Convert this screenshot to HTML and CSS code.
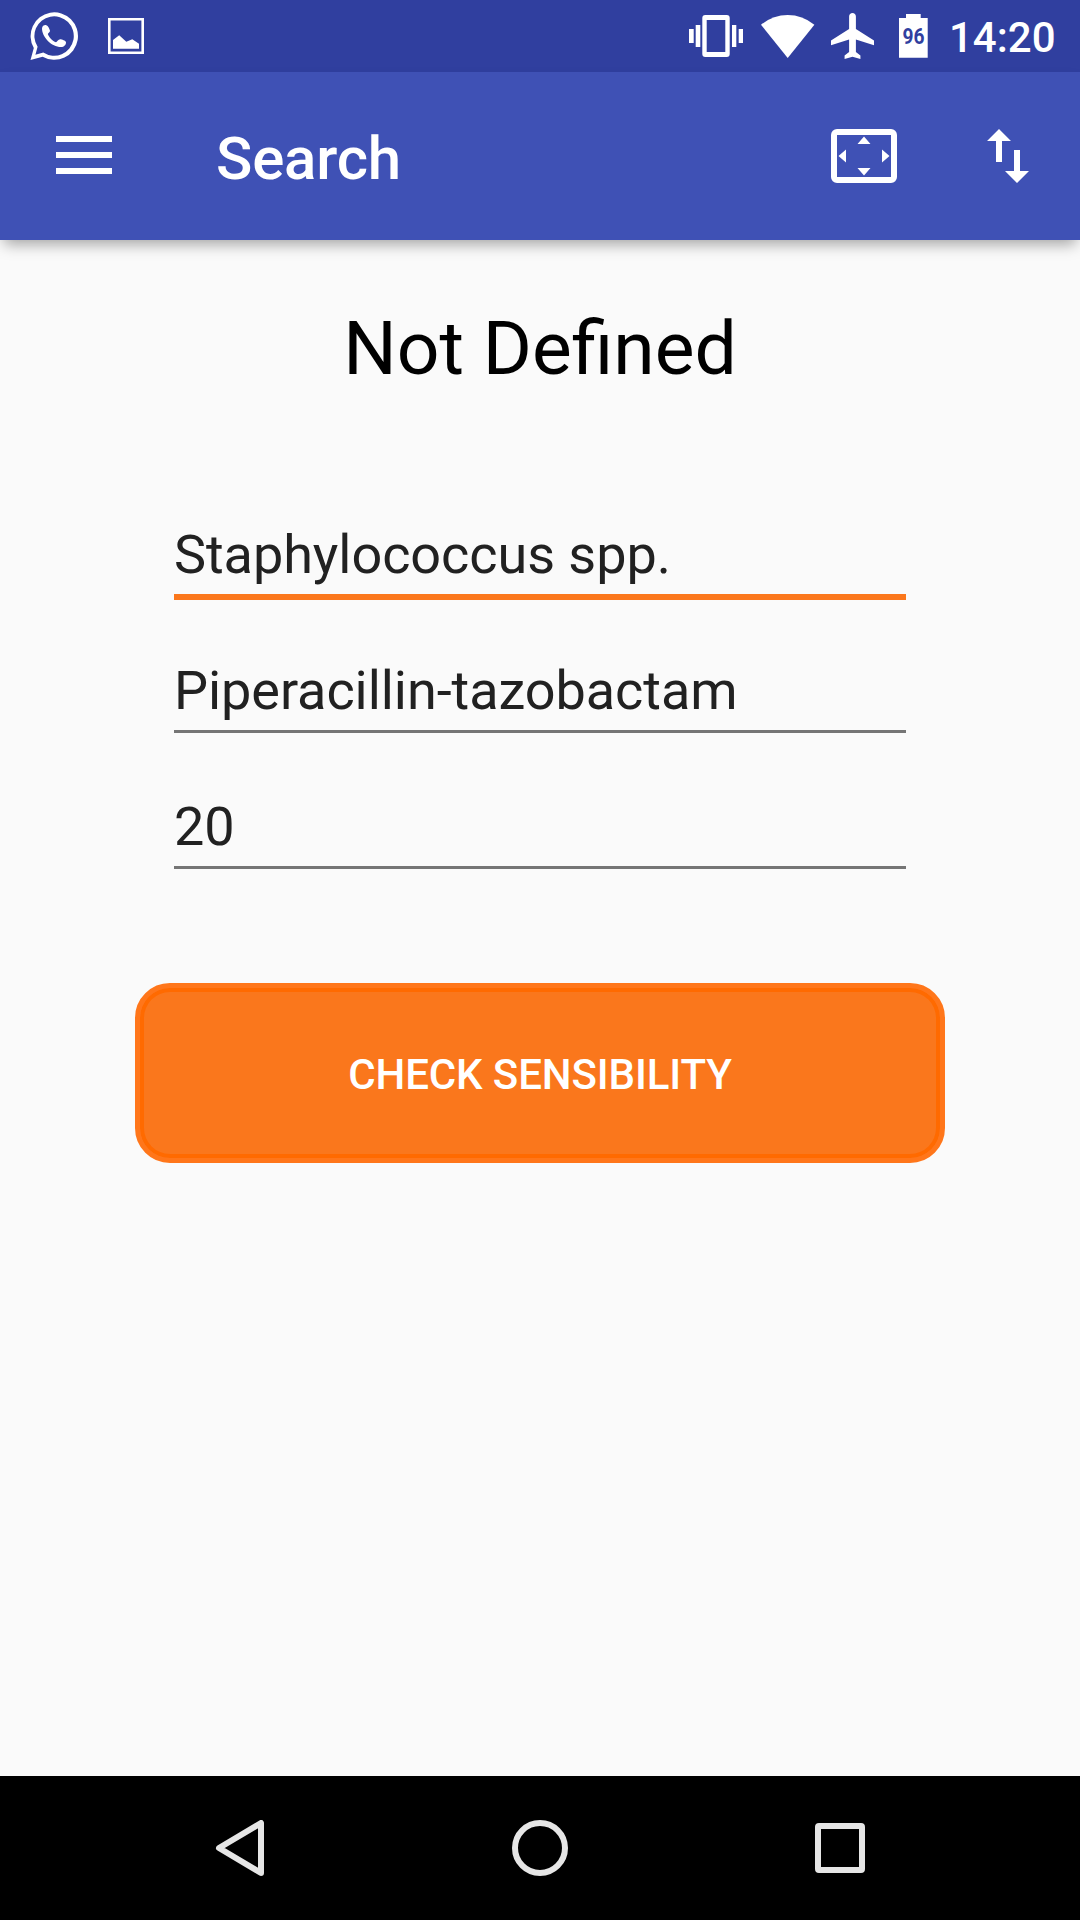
FILE: index.html
```html
<!DOCTYPE html>
<html lang="en">
<head>
<meta charset="utf-8">
<title>Search</title>
<link rel="stylesheet" href="styles.css">
</head>
<body>
<div class="screen">
  <div class="status-bar">
    <svg class="icon-whatsapp" width="48" height="48" viewBox="0 0 48 48">
      <path fill-rule="evenodd" d="M.5 48 3.8 36A23.7 23.7 0 1 1 12.6 44.7ZM5.4 42.7 13.3 40.5A19.7 19.7 0 1 0 7.6 34.8Z"/>
      <path d="M12 16.5C12 14 14.5 12.8 16.3 13.2 18.2 13.8 19.5 17 20 18.7 20 20.2 18.3 20.8 17.8 22 19 25.5 22.5 29 26 30.2 27.5 29.5 28 27.4 30.2 27.3 32 27.5 35.5 28.5 36 30.2 36.2 32.8 34 35 31 35 21.5 35 12 25 12 16.5Z"/>
    </svg>
    <svg class="icon-image" width="36" height="36" viewBox="0 0 36 36">
      <path fill-rule="evenodd" d="M0 0H36V36H0ZM2.6 2.6V33.4H33.4V2.6Z"/>
      <path d="M5 30.8V22L11.2 17.3 18.3 23.7 24.3 21.3 31 25.7V30.8Z"/>
    </svg>
    <div class="status-system">
      <svg class="icon-vibrate" width="54" height="42" viewBox="0 0 54 42">
        <path d="M0 14H4.7V28H0ZM6.7 10H11.3V32H6.7ZM43 10H47.3V32H43ZM49.7 14H54V28H49.7Z"/>
        <path fill-rule="evenodd" d="M16.3 0H37.7A3 3 0 0 1 40.7 3V39A3 3 0 0 1 37.7 42H16.3A3 3 0 0 1 13.3 39V3A3 3 0 0 1 16.3 0ZM17.7 5V37H36.3V5Z"/>
      </svg>
      <svg class="icon-wifi" width="54" height="43" viewBox="0 0 54 43">
        <path d="M0 9.7Q12 0 26.7 0T53.4 9.7L26.7 43Z"/>
      </svg>
      <svg class="icon-airplane" width="43" height="46" viewBox="2 2 19 20" preserveAspectRatio="none">
        <path d="M21 16v-2l-8-5V3.500c0-.83-.67-1.500-1.500-1.500S10 2.670 10 3.500V9l-8 5v2l8-2.500V19l-2 1.500V22l3.500-1 3.500 1v-1.500L13 19v-5.500z"/>
      </svg>
      <svg class="icon-battery" width="29" height="44" viewBox="0 0 29 44">
        <path d="M7 0H21.700V4H28.700V43.700H0V4H7Z"/>
        <text class="battery-level" x="3.500" y="29.800" textLength="22" lengthAdjust="spacingAndGlyphs">96</text>
      </svg>
      <span class="clock">14:20</span>
    </div>
  </div>
  <div class="app-bar">
    <svg class="icon-menu" width="56" height="38" viewBox="0 0 56 38">
      <path d="M0 0H56V6H0ZM0 16H56V22H0ZM0 32H56V38H0Z"/>
    </svg>
    <span class="app-title">Search</span>
    <svg class="icon-overscan" width="66" height="54" viewBox="0 0 66 54">
      <path fill-rule="evenodd" d="M6 0H60A6 6 0 0 1 66 6V48A6 6 0 0 1 60 54H6A6 6 0 0 1 0 48V6A6 6 0 0 1 6 0ZM6 6V48H60V6Z"/>
      <path d="M33 7.500 39.500 15H26.500ZM33 46.500 26.500 39H39.500ZM7.500 27 15 20.500V33.500ZM58.500 27 51 33.500V20.500Z"/>
    </svg>
    <svg class="icon-swap" width="42" height="54" viewBox="0 0 42 54">
      <path d="M12 0 24 12H15V33H9V12H0ZM27 21H33V42H42L30 54 18 42H27Z"/>
    </svg>
  </div>
  <main class="content">
    <h1 class="result">Not Defined</h1>
    <div class="form">
      <div class="field"><div class="field-value field-value--focused">Staphylococcus spp.</div></div>
      <div class="field"><div class="field-value">Piperacillin-tazobactam</div></div>
      <div class="field"><div class="field-value">20</div></div>
    </div>
    <button class="check-button" type="button"><span class="check-label">CHECK SENSIBILITY</span></button>
  </main>
  <div class="nav-bar">
    <svg width="56" height="56" viewBox="0 0 56 56"><path d="M49 3V53L7 28Z"/></svg>
    <svg width="56" height="56" viewBox="0 0 56 56"><circle cx="28" cy="28" r="25"/></svg>
    <svg width="56" height="56" viewBox="0 0 56 56"><rect x="6" y="6" width="44" height="44" rx="1"/></svg>
  </div>
</div>
</body>
</html>
```

FILE: styles.css
```css
* {
  box-sizing: border-box;
}

body {
  margin: 0;
  font-family: Roboto, "Noto Sans", sans-serif;
  background: #fafafa;
}

svg {
  display: block;
  flex: none;
  fill: #fff;
}

.screen {
  display: flex;
  flex-direction: column;
  width: 1080px;
  height: 1920px;
  overflow: hidden;
}

.status-bar {
  display: flex;
  flex: none;
  align-items: center;
  height: 72px;
  padding: 0 25px 0 30px;
  background: #303f9f;
}

.icon-image {
  margin-left: 30px;
}

.status-system {
  display: flex;
  align-items: center;
  margin-left: auto;
}

.icon-wifi {
  margin-left: 18px;
}

.icon-airplane {
  margin-left: 16px;
}

.icon-battery {
  margin-left: 25px;
}

.battery-level {
  font-size: 22px;
  font-weight: 700;
  fill: #303f9f;
}

.clock {
  width: 106px;
  margin-left: 21px;
  font-size: 42px;
  font-weight: 500;
  line-height: 50px;
  padding-top: 3px;
  color: #fff;
}

.app-bar {
  display: flex;
  flex: none;
  align-items: center;
  height: 168px;
  padding: 0 51px 0 56px;
  background: #3f51b5;
  box-shadow: 0 8px 14px -4px rgba(0, 0, 0, 0.36);
}

.icon-menu {
  margin-bottom: 2px;
}

.app-title {
  margin-left: 104px;
  padding-top: 6px;
  font-size: 60px;
  font-weight: 500;
  line-height: 70px;
  letter-spacing: -0.2px;
  color: #fff;
}

.icon-overscan {
  margin-left: auto;
}

.icon-swap {
  margin-left: 90px;
}

.content {
  display: flex;
  flex: 1;
  flex-direction: column;
  align-items: center;
  padding-top: 64px;
}

.result {
  margin: 0;
  font-size: 75px;
  font-weight: 400;
  line-height: 88px;
  color: #000;
}

.form {
  width: 732px;
  margin-top: 131px;
}

.field {
  height: 136px;
}

.field-value {
  padding-bottom: 7px;
  border-bottom: 3px solid #757575;
  font-size: 54px;
  line-height: 64px;
  letter-spacing: -0.06px;
  color: #212121;
}

.field-value--focused {
  border-bottom: 6px solid #fb771c;
}

.check-button {
  width: 810px;
  height: 180px;
  margin-top: 52px;
  padding: 0;
  border: 5px solid #ff761a;
  border-radius: 35px;
  background: #fa771c;
  box-shadow: inset 0 0 0 4px #ff6a00;
  font-family: inherit;
  font-size: 42px;
  font-weight: 500;
  line-height: 50px;
  letter-spacing: -0.12px;
  color: #fff;
}

.check-label {
  display: block;
  padding-top: 3px;
}

.nav-bar {
  display: flex;
  flex: none;
  align-items: center;
  justify-content: center;
  gap: 244px;
  height: 144px;
  background: #000;
}

.nav-bar svg {
  fill: none;
  stroke: #e6e6e6;
  stroke-width: 6;
  stroke-linejoin: round;
}
```
